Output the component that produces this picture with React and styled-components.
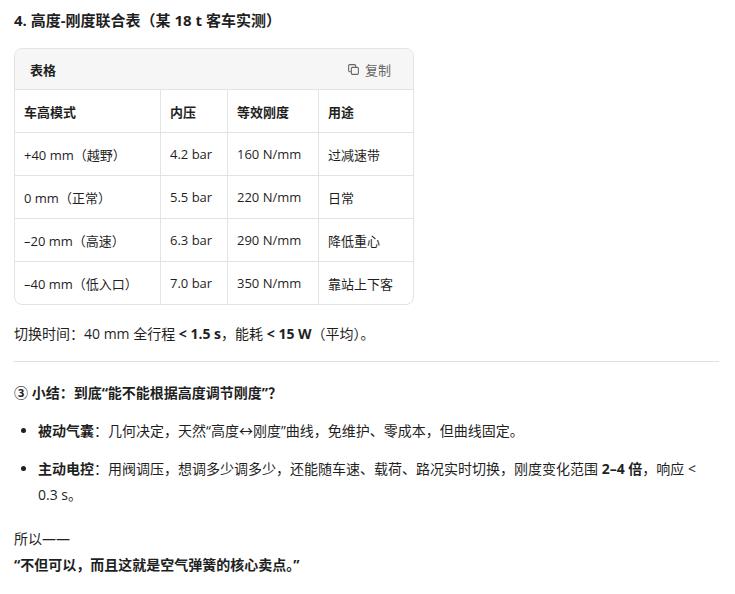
import React from "react";
import styled, { createGlobalStyle } from "styled-components";

const GlobalStyle = createGlobalStyle`
  body {
    margin: 0;
    background: #fff;
    color: #1f1f1f;
    font-family: "Open Sans", "Noto Sans CJK SC", sans-serif;
  }
`;

const Page = styled.div`
  padding: 8px 14px 0 14px;
  width: 705px;
  font-size: 14px;
`;

const Title = styled.h3`
  font-size: 15px;
  font-weight: 700;
  margin: 0 0 16px;
  line-height: 24px;
`;

const TableBox = styled.div`
  width: 398px;
  border: 1px solid #e3e3e3;
  border-radius: 8px;
  overflow: hidden;
`;

const TableHead = styled.div`
  display: flex;
  justify-content: space-between;
  align-items: center;
  height: 40px;
  padding: 0 22px 0 15px;
  background: #f6f6f6;
  border-bottom: 1px solid #e3e3e3;
  font-size: 13px;
  font-weight: 700;
`;

const CopyBtn = styled.span`
  display: flex;
  align-items: center;
  gap: 5px;
  font-weight: 400;
  color: #666;
`;

const Table = styled.table`
  width: 100%;
  border-collapse: collapse;
  font-size: 13px;
  td, th {
    height: 42px;
    padding: 0 9px;
    text-align: left;
    border-right: 1px solid #e3e3e3;
    border-bottom: 1px solid #e3e3e3;
    white-space: nowrap;
  }
  th { font-weight: 700; }
  td:last-child, th:last-child { border-right: none; }
  tr:last-child td { border-bottom: none; }
`;

const Para = styled.p`
  margin: 16px 0 0;
  line-height: 26px;
`;

const Rule = styled.hr`
  border: none;
  border-top: 1px solid #e0e0e0;
  margin: 14px 0 18px;
`;

const Heading = styled.h4`
  font-size: 14px;
  font-weight: 700;
  margin: 0 0 10px;
  line-height: 26px;
`;

const List = styled.ul`
  margin: 0;
  padding-left: 24px;
  li { line-height: 26px; margin: 12px 0; }
`;

const rows = [
  ["+40 mm（越野）", "4.2 bar", "160 N/mm", "过减速带"],
  ["0 mm（正常）", "5.5 bar", "220 N/mm", "日常"],
  ["–20 mm（高速）", "6.3 bar", "290 N/mm", "降低重心"],
  ["–40 mm（低入口）", "7.0 bar", "350 N/mm", "靠站上下客"],
];

export default function App() {
  return (
    <>
      <GlobalStyle />
      <Page>
        <Title>4. 高度-刚度联合表（某 18 t 客车实测）</Title>
        <TableBox>
          <TableHead>
            <span>表格</span>
            <CopyBtn>
              <svg width="13" height="13" viewBox="0 0 24 24" fill="none" stroke="#666" strokeWidth="2">
                <rect x="8" y="8" width="13" height="13" rx="2" />
                <path d="M16 8V5a2 2 0 0 0-2-2H5a2 2 0 0 0-2 2v9a2 2 0 0 0 2 2h3" />
              </svg>
              复制
            </CopyBtn>
          </TableHead>
          <Table>
            <thead>
              <tr>
                <th style={{ width: 127 }}>车高模式</th>
                <th style={{ width: 48 }}>内压</th>
                <th style={{ width: 72 }}>等效刚度</th>
                <th>用途</th>
              </tr>
            </thead>
            <tbody>
              {rows.map((r) => (
                <tr key={r[0]}>
                  {r.map((c) => <td key={c}>{c}</td>)}
                </tr>
              ))}
            </tbody>
          </Table>
        </TableBox>
        <Para>切换时间：40 mm 全行程 <b>&lt; 1.5 s</b>，能耗 <b>&lt; 15 W</b>（平均）。</Para>
        <Rule />
        <Heading>③ 小结：到底“能不能根据高度调节刚度”？</Heading>
        <List>
          <li><b>被动气囊</b>：几何决定，天然“高度↔刚度”曲线，免维护、零成本，但曲线固定。</li>
          <li><b>主动电控</b>：用阀调压，想调多少调多少，还能随车速、载荷、路况实时切换，刚度变化范围 <b>2–4</b> <b>倍</b>，响应 &lt; 0.3 s。</li>
        </List>
        <Para style={{ marginTop: 18 }}>所以——<br /><b>“不但可以，而且这就是空气弹簧的核心卖点。”</b></Para>
      </Page>
    </>
  );
}
